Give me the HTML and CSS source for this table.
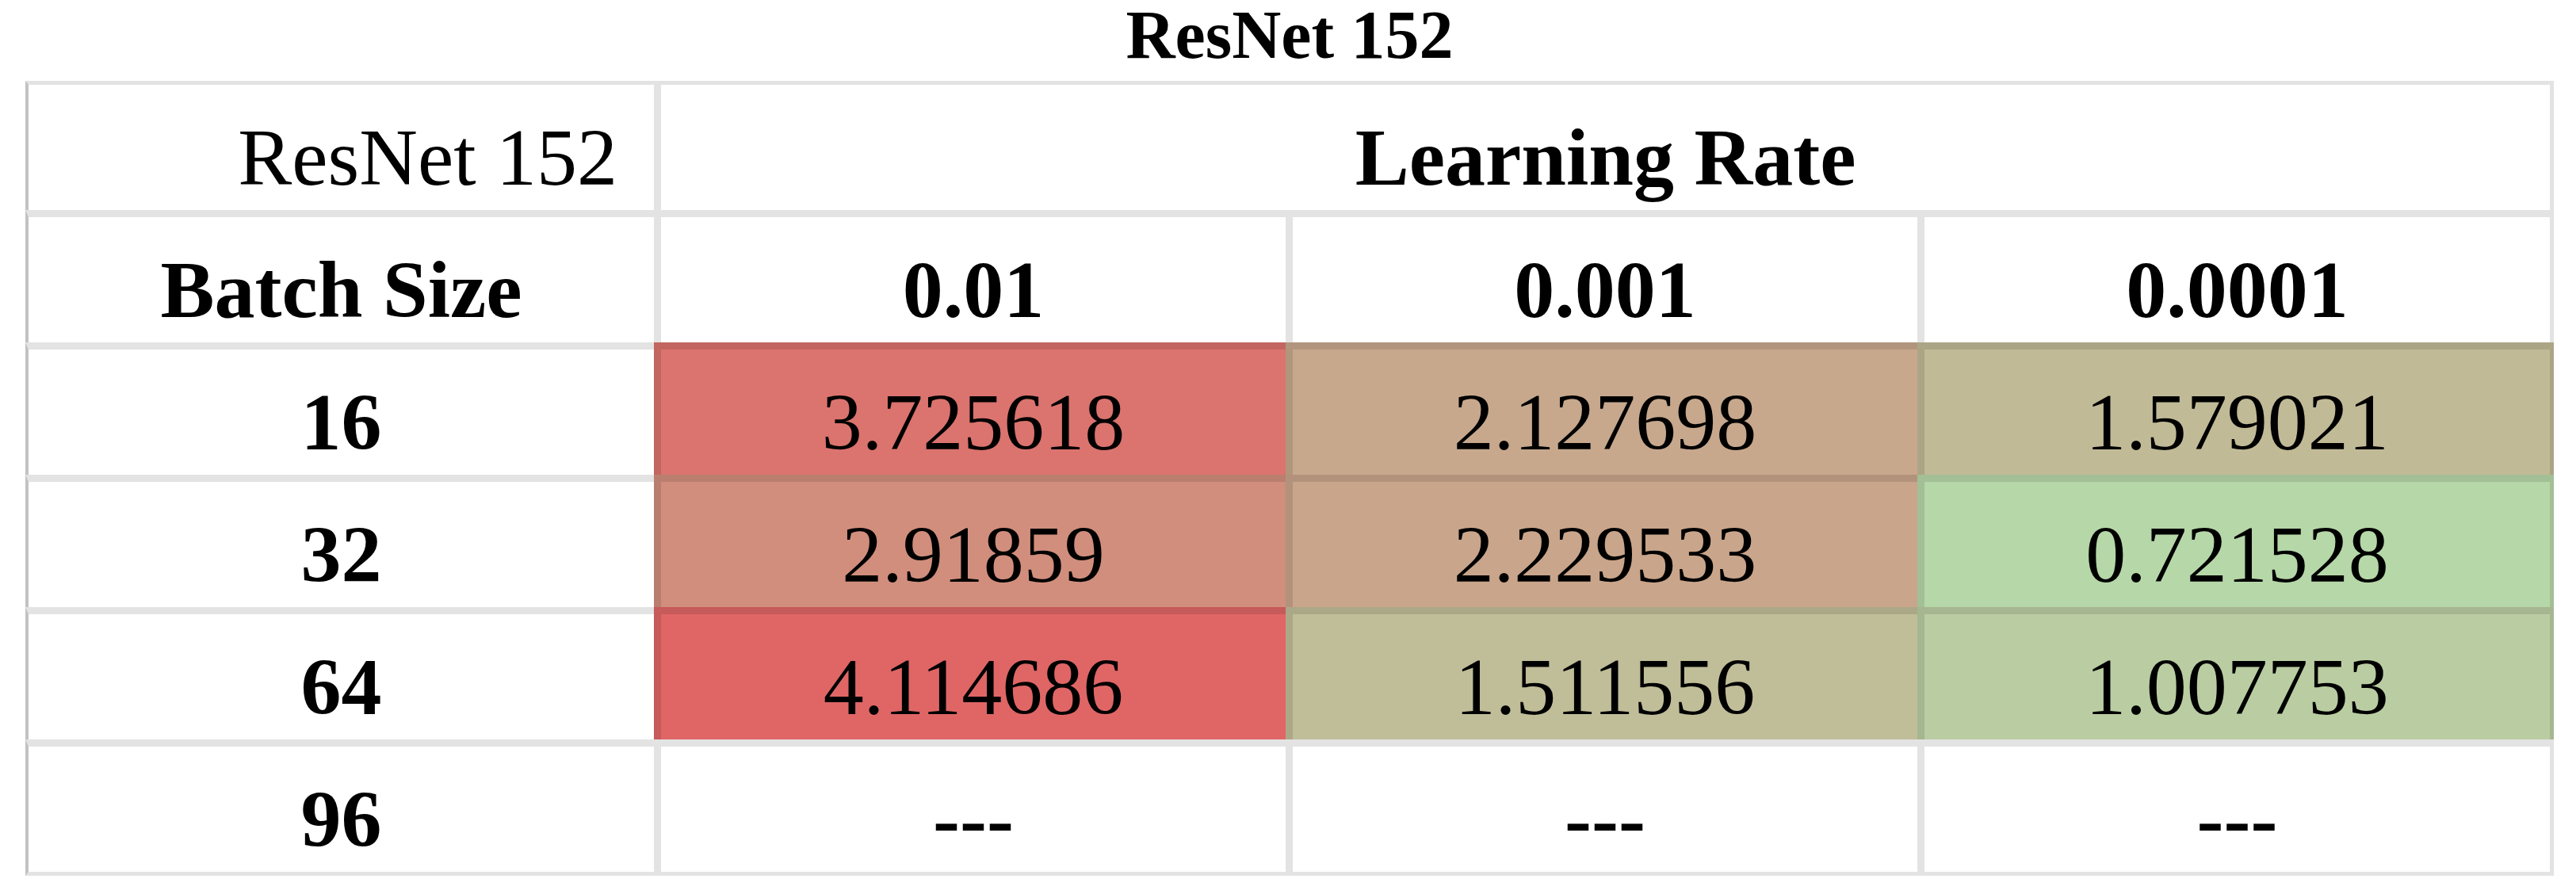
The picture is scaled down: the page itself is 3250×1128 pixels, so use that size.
FILE: index.html
```html
<!doctype html>
<html lang="en">
    <head>
        <meta charset="UTF-8" />
        <title>ResNet 152</title>
        <link rel="stylesheet" href="styles.css">
    </head>
    <body>
        <div class="page">
            <h1>ResNet 152</h1>
            <table class="grid">
                <colgroup>
                    <col class="col-head" />
                    <col class="col-mid" />
                    <col class="col-mid" />
                    <col class="col-last" />
                </colgroup>
                <tr>
                    <td class="model">ResNet 152</td>
                    <td class="bold" colspan="3">Learning Rate</td>
                </tr>
                <tr>
                    <td class="bold">Batch Size</td>
                    <td class="bold">0.01</td>
                    <td class="bold">0.001</td>
                    <td class="bold">0.0001</td>
                </tr>
                <tr>
                    <td class="bold">16</td>
                    <td data-v="3.725618">3.725618</td>
                    <td data-v="2.127698">2.127698</td>
                    <td data-v="1.579021">1.579021</td>
                </tr>
                <tr>
                    <td class="bold">32</td>
                    <td data-v="2.91859">2.91859</td>
                    <td data-v="2.229533">2.229533</td>
                    <td data-v="0.721528">0.721528</td>
                </tr>
                <tr>
                    <td class="bold">64</td>
                    <td data-v="4.114686">4.114686</td>
                    <td data-v="1.511556">1.511556</td>
                    <td data-v="1.007753">1.007753</td>
                </tr>
                <tr>
                    <td class="bold">96</td>
                    <td class="bold">---</td>
                    <td class="bold">---</td>
                    <td class="bold">---</td>
                </tr>
            </table>
        </div>

        <script>
            // colour scale: lowest value green, highest red
            const low = [182, 215, 168];
            const high = [224, 102, 102];

            const cells = document.querySelectorAll("td[data-v]");
            const values = [...cells].map((c) => parseFloat(c.dataset.v));
            const min = Math.min(...values);
            const max = Math.max(...values);

            cells.forEach((cell, i) => {
                const t = (values[i] - min) / (max - min);
                const rgb = low.map((l, k) => Math.round(l + (high[k] - l) * t));
                cell.style.background = `rgb(${rgb.join(", ")})`;
            });
        </script>
    </body>
</html>
```

FILE: styles.css
```css
* {
    margin: 0;
    padding: 0;
    box-sizing: border-box;
}

body {
    background: #ffffff;
    font-family: "Liberation Serif", "Times New Roman", serif;
    color: #000;
}

.page {
    width: 3250px;
    padding: 1px 0 0 32px;
}

h1 {
    width: 3190px;
    text-align: center;
    font-size: 86px;
    line-height: 86px;
    font-weight: bold;
    margin-bottom: 15px;
}

.grid {
    width: 3190px;
    table-layout: fixed;
    border-collapse: separate;
    border-spacing: 0;
}

.col-head {
    width: 793px;
}

.col-mid {
    width: 797px;
}

.col-last {
    width: 803px;
}

.grid td {
    background: #ffffff;
    border-top: 9px solid rgba(0, 0, 0, 0.11);
    border-left: 9px solid rgba(0, 0, 0, 0.11);
    padding-top: 25px;
    line-height: 133px;
    font-size: 102px;
    text-align: center;
    vertical-align: top;
    white-space: nowrap;
}

.grid tr:first-child td {
    border-top-width: 5px;
}

.grid td:first-child {
    border-left: 4px solid #c2c2c2;
}

.grid td:last-child {
    border-right: 5px solid rgba(0, 0, 0, 0.11);
}

.grid tr:last-child td {
    border-bottom: 5px solid rgba(0, 0, 0, 0.11);
}

.grid td.bold {
    font-weight: bold;
}

.grid td.model {
    text-align: right;
    padding-right: 46px;
}
```
